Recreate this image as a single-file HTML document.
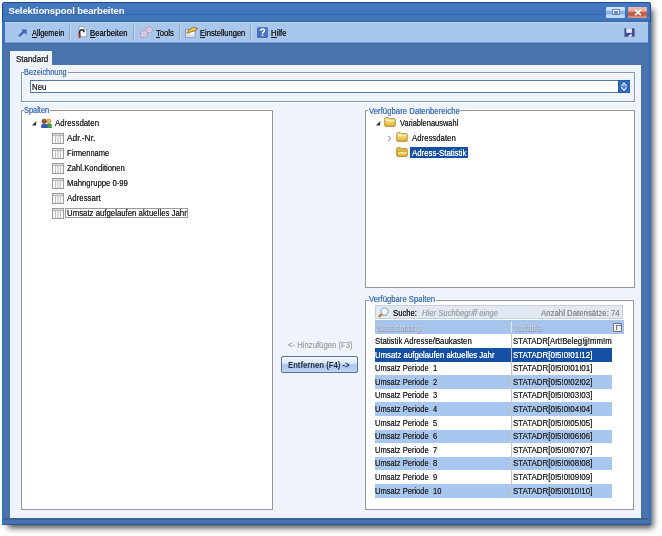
<!DOCTYPE html>
<html><head><meta charset="utf-8">
<style>
*{margin:0;padding:0;box-sizing:border-box}
html,body{width:662px;height:536px;overflow:hidden;background:#fff;font-family:"Liberation Sans",sans-serif;font-size:8px;color:#222}
.a{position:absolute}
.t{position:absolute;white-space:pre;transform-origin:0 0;opacity:.995;text-shadow:0 0 .2px currentColor}
.t u{text-decoration:underline;text-underline-offset:.5px}
.sep{position:absolute;top:23.5px;width:2px;height:16.5px;border-left:1px solid #8ea5c6;border-right:1px solid #c6d7ee}
.gb{position:absolute;border:1px solid #979797;box-shadow:0 -1px 0 #fff}
.glb{position:absolute;background:#eff4fc;height:6px}
.row{position:absolute;left:375px;width:237px}
</style></head><body>
<!-- window -->
<div class="a" style="left:2px;top:2px;width:649px;height:523px;background:#3672bd;border-radius:3px 3px 0 0;box-shadow:4px 5px 6px -2px rgba(0,0,0,.7)"></div>
<div class="a" style="left:2px;top:2px;width:649px;height:20px;border:1px solid #1d4a8e;border-bottom:0;border-top-width:1.5px;border-radius:3px 3px 0 0"></div>
<div class="a" style="left:3px;top:3px;width:647px;height:19px;background:linear-gradient(#4379c1 0,#4075bd 55%,#3466a9 60%,#4276bb 66%,#4276bb 90%,#3a68a9 95%,#3a68a9 100%)"></div>
<div class="a" style="left:4px;top:43px;width:644px;height:480px;background:#4a73ab"></div>
<div class="a" style="left:4px;top:520px;width:644px;height:2px;background:#4a73ab"></div>
<div class="a" style="left:4px;top:518px;width:644px;height:2px;background:#3c6299"></div>
<div class="a" style="left:2px;top:524px;width:649px;height:1px;background:#2a5a9c"></div>
<!-- window buttons -->
<div class="a" style="left:606px;top:7px;width:19px;height:10.5px;background:linear-gradient(#d4e6fb 0,#c6dcf8 30%,#8fb5e4 40%,#86aee2 60%,#b8d4f6 70%,#c4dcf8 100%);border-radius:1px"></div>
<div class="a" style="left:611.5px;top:9px;width:8px;height:6px;border:1px solid #6a80a8;background:#eef4fc"></div>
<div class="a" style="left:613.5px;top:11px;width:4px;height:2.5px;background:#6e8ec4"></div>
<div class="a" style="left:628px;top:7px;width:19px;height:10.5px;background:linear-gradient(#ecbcb0 0,#e4aa9c 38%,#cc6452 45%,#c4563f 75%,#d98470 85%,#e4a090 100%);border-radius:1px"></div>
<svg class="a" style="left:634px;top:8.5px" width="8" height="7" viewBox="0 0 8 7"><path d="M1.2 .8L6.8 6.2M6.8 .8L1.2 6.2" stroke="#fff" stroke-width="1.6"/></svg>
<!-- toolbar -->
<div class="a" style="left:5px;top:22px;width:643px;height:22px;background:linear-gradient(#bcd4f2 0,#a9c6eb 8%,#a8c5eb 92%,#3f6aa5 95%)"></div>
<svg class="a" style="left:17.5px;top:29px" width="9" height="8" viewBox="0 0 9 8"><path d="M1 7.2 L6 2.4" stroke="#4364b6" stroke-width="2.2"/><path d="M3.2 .5 H8.6 V5.9Z" fill="#4364b6"/></svg>
<div class="sep" style="left:69px"></div>
<svg class="a" style="left:76.5px;top:26px" width="11" height="12" viewBox="0 0 11 12"><path d="M2 .7 H7 L9.8 3.5 V10.8 H2 Z" fill="#fbfcff" stroke="#8d9cc0" stroke-width=".9"/><path d="M7 .7V3.5H9.8" fill="#dde4f2" stroke="#8d9cc0" stroke-width=".6"/><path d="M2.6 11.6 V6.3 Q2.6 3.8 4.9 3.8 Q7 3.8 7 6.2" stroke="#2a2420" stroke-width="1.5" fill="none"/><path d="M2.6 11.6 V7.6" stroke="#d01c28" stroke-width="1.6"/></svg>
<div class="sep" style="left:133px"></div>
<svg class="a" style="left:139px;top:25px" width="15" height="14" viewBox="0 0 15 14"><g stroke="#b3a4c6" stroke-width="1.6" stroke-dasharray="1.6 .9" fill="none"><circle cx="5" cy="9" r="3.4"/><circle cx="10.3" cy="4.8" r="3.1"/></g><circle cx="5" cy="9" r="2.9" fill="#e4d7eb" stroke="#bba9c9" stroke-width=".6"/><circle cx="10.3" cy="4.8" r="2.6" fill="#e8dcef" stroke="#bba9c9" stroke-width=".6"/><circle cx="5" cy="9" r="1.1" fill="#c2a6c6"/><circle cx="10.3" cy="4.8" r="1" fill="#c7adca"/></svg>
<div class="sep" style="left:179px"></div>
<svg class="a" style="left:184px;top:26px" width="14" height="12" viewBox="0 0 14 12"><rect x="1.6" y="3.8" width="9.4" height="7.4" fill="#f8fafd" stroke="#7f90ab" stroke-width=".9"/><rect x="2.1" y="8.2" width="8.4" height="2.5" fill="#d6e2f2"/><path d="M2.6 6.8 Q5 2.6 9.5 1.6 Q12.4 1 13 2.8 Q12 5 9 5.4 Q6 5.8 4.4 7.4Z" fill="#e9b72a" stroke="#7c5c12" stroke-width=".7"/><path d="M6 4.6 Q8.5 2.8 11.5 2.6" stroke="#f8e07a" stroke-width=".8" fill="none"/><path d="M12 1.6 L13.4 2.6 L12.8 4.2Z" fill="#5a4a80"/></svg>
<div class="sep" style="left:250px"></div>
<div class="a" style="left:257px;top:27px;width:11px;height:10.5px;background:#4a74c2;border-radius:1.5px"></div>
<svg class="a" style="left:257px;top:27px" width="11" height="11" viewBox="0 0 11 11"><path d="M3.6 3.9Q3.6 1.9 5.5 1.9Q7.5 1.9 7.5 3.6Q7.5 4.6 6.3 5.2Q5.5 5.6 5.5 6.7" stroke="#fff" stroke-width="1.5" fill="none"/><rect x="4.7" y="7.6" width="1.6" height="1.6" fill="#fff"/></svg>
<svg class="a" style="left:624px;top:28px" width="11" height="9" viewBox="0 0 11 9"><path d="M0.4 0.3 H9.6 L10.6 1.3 V8.7 H0.4Z" fill="#414d94"/><rect x="2.3" y="0.3" width="5.6" height="4.6" fill="#e6e6f2"/><path d="M3.8 8.7 L6.6 5.9 H7.6 V8.7Z" fill="#eef0f8"/></svg>
<!-- band & panel -->
<div class="a" style="left:10px;top:51px;width:42px;height:14px;background:#eff4fc"></div>
<div class="a" style="left:10px;top:65px;width:631px;height:453px;background:#eff4fc"></div>

<!-- Bezeichnung -->
<div class="gb" style="left:21px;top:72px;width:614px;height:30px;border-color:#8298b8;box-shadow:inset 1px 1px 0 #fff,1px 1px 0 #fff"></div>
<div class="glb" style="left:24px;top:69px;width:44px"></div>
<div class="a" style="left:30px;top:80px;width:600px;height:13px;background:#fff;border:1px solid #5776a8"></div>
<div class="a" style="left:618px;top:80px;width:12px;height:13px;background:#2f6cc2;border:1px solid #2a5aa6"></div>
<svg class="a" style="left:620px;top:81px" width="8" height="11" viewBox="0 0 8 11"><path d="M1.4 5.2 L4 2 L6.6 5.2 M1.4 6.2 L4 9.2 L6.6 6.2" stroke="#d8e6f8" stroke-width="1.3" fill="none"/><circle cx="4" cy="5.2" r=".9" fill="#9fbde6"/></svg>

<!-- Spalten -->
<div class="gb" style="left:21px;top:110px;width:252px;height:400px;background:#fff"></div>
<div class="glb" style="left:24px;top:107px;width:26px"></div>
<!-- Datenbereiche -->
<div class="gb" style="left:365px;top:110px;width:270px;height:178px;background:#fff"></div>
<div class="glb" style="left:368px;top:107px;width:92px"></div>
<!-- Verfuegbare Spalten -->
<div class="gb" style="left:365px;top:300px;width:269px;height:210px;background:#fff"></div>
<div class="glb" style="left:369px;top:296px;width:67px"></div>

<svg width="0" height="0" style="position:absolute">
<defs>
<symbol id="colic" viewBox="0 0 12 11"><rect x=".5" y=".5" width="11" height="10" fill="#fdfdfd" stroke="#9a9a9a"/><path d="M1 2.6H11" stroke="#a8a8a8" stroke-width="1"/><rect x="1" y="1" width="10" height="1.2" fill="#dcdcdc"/><path d="M3.6 3V10M6 3V10M8.4 3V10" stroke="#b4b4b4" stroke-width=".9"/></symbol>
<linearGradient id="fg" x1="0" y1="0" x2="0" y2="1"><stop offset="0" stop-color="#fdf0b0"/><stop offset=".5" stop-color="#f3d26a"/><stop offset="1" stop-color="#e0ac30"/></linearGradient>
<symbol id="fold" viewBox="0 0 12 10"><path d="M.8 1.6Q.8 .7 1.7 .7H4.3L5.3 1.7H10.2Q11.2 1.7 11.2 2.7V8.5Q11.2 9.3 10.4 9.3H1.6Q.8 9.3 .8 8.5Z" fill="url(#fg)" stroke="#a8801e" stroke-width=".9"/><path d="M1.8 3.4H10.2" stroke="#fff6c8" stroke-width=".9"/></symbol>
<symbol id="foldo" viewBox="0 0 12 10"><path d="M.8 1.6Q.8 .7 1.7 .7H4.3L5.3 1.7H10.2Q11.2 1.7 11.2 2.7V8.5Q11.2 9.3 10.4 9.3H1.6Q.8 9.3 .8 8.5Z" fill="#e8bc48" stroke="#a8801e" stroke-width=".9"/><path d="M1.6 4.3H10L11.6 5.6L10.4 9.2H1.5Z" fill="url(#fg)" stroke="#b08a28" stroke-width=".7"/></symbol>
</defs></svg>

<!-- left tree -->
<svg class="a" style="left:31px;top:120px" width="6" height="6" viewBox="0 0 6 6"><path d="M.8 5.4H5.2V1Z" fill="#3a3a3a"/></svg>
<svg class="a" style="left:40.5px;top:117.5px" width="11" height="10.5" viewBox="0 0 11 10.5"><path d="M5.2 10.2V7.6Q5.2 5.6 7.9 5.6Q10.6 5.6 10.6 7.6V10.2Z" fill="#3fa23f" stroke="#2a7a2a" stroke-width=".5"/><circle cx="7.9" cy="3" r="2.1" fill="#f0bc50" stroke="#a87a28" stroke-width=".6"/><path d="M.4 10.2V7.8Q.4 5.9 3.2 5.9Q6 5.9 6 7.8V10.2Z" fill="#3858c6" stroke="#243e96" stroke-width=".5"/><circle cx="3.2" cy="3.3" r="2.1" fill="#a4582a" stroke="#3e2414" stroke-width=".7"/></svg>
<svg class="a" style="left:52px;top:133px" width="12" height="11"><use href="#colic"/></svg>
<svg class="a" style="left:52px;top:148px" width="12" height="11"><use href="#colic"/></svg>
<svg class="a" style="left:52px;top:163px" width="12" height="11"><use href="#colic"/></svg>
<svg class="a" style="left:52px;top:178px" width="12" height="11"><use href="#colic"/></svg>
<svg class="a" style="left:52px;top:193px" width="12" height="11"><use href="#colic"/></svg>
<svg class="a" style="left:52px;top:208px" width="12" height="11"><use href="#colic"/></svg>
<div class="a" style="left:65px;top:208px;width:123px;height:10px;border:1px solid #9a9a9a"></div>

<!-- right tree -->
<svg class="a" style="left:375px;top:120px" width="6" height="6" viewBox="0 0 6 6"><path d="M.8 5.4H5.2V1Z" fill="#3a3a3a"/></svg>
<svg class="a" style="left:384px;top:117px" width="12" height="10"><use href="#fold"/></svg>
<svg class="a" style="left:387px;top:134.5px" width="5" height="7" viewBox="0 0 5 7"><path d="M1 .8L4 3.5L1 6.2" stroke="#8c8c8c" fill="none" stroke-width="1"/></svg>
<svg class="a" style="left:396px;top:132px" width="12" height="10"><use href="#fold"/></svg>
<svg class="a" style="left:396px;top:147px" width="12" height="10"><use href="#foldo"/></svg>
<div class="a" style="left:410px;top:147px;width:58px;height:11px;background:#1550a6"></div>

<!-- list -->
<div class="a" style="left:375px;top:305px;width:248px;height:14px;background:#e2e9f3;border:1px solid #c4cfdf"></div>
<svg class="a" style="left:377px;top:307px" width="13" height="11" viewBox="0 0 13 11"><circle cx="7.6" cy="4.6" r="3.6" fill="#f4f9fd" stroke="#8ea9c9" stroke-width="1.1"/><path d="M2.6 9.2L4.4 7.5" stroke="#c07a38" stroke-width="2.4" stroke-linecap="round"/></svg>
<div class="a" style="left:375px;top:320px;width:249px;height:14px;background:#a6c4ec"></div>
<div class="a" style="left:511px;top:321px;width:1px;height:12px;background:#dfe9f7"></div>
<div class="a" style="left:613px;top:323px;width:9px;height:8.5px;border:1px solid #6c7486;border-radius:1px;background:#f6f7f9"></div>
<div class="a" style="left:615.5px;top:325px;width:5.5px;height:5px;border:1px solid #6c7486;border-width:1px 0 0 1px;background:#e9efdc"></div>
<div class="row" style="top:348.00px;height:13.60px;background:#1550a6"></div>
<div class="row" style="top:375.20px;height:13.60px;background:#a8c7ee"></div>
<div class="row" style="top:402.40px;height:13.60px;background:#a8c7ee"></div>
<div class="row" style="top:429.60px;height:13.60px;background:#a8c7ee"></div>
<div class="row" style="top:456.80px;height:13.60px;background:#a8c7ee"></div>
<div class="row" style="top:484.00px;height:13.60px;background:#a8c7ee"></div>
<div class="a" style="left:511px;top:334px;width:1px;height:164px;background:#c6c6c6"></div>
<!-- middle button -->
<div class="a" style="left:281px;top:355.5px;width:77px;height:17px;border:1px solid #5b6f94;border-radius:2px;background:linear-gradient(#f3f7fc 0%,#dde9f7 40%,#a9c6ee 55%,#c0d6f3 100%)"></div>
<div class="t" style="left:8.40px;top:5.00px;font:normal bold 9.50px 'Liberation Sans';line-height:12px;letter-spacing:-0.090px;color:#fff;text-shadow:none">Selektionspool bearbeiten</div>
<div class="t" style="left:31.90px;top:29.00px;font:normal normal 8.20px 'Liberation Sans';line-height:10px;transform:scaleX(0.8984);color:#1a1a1a"><u>A</u>llgemein</div>
<div class="t" style="left:90.40px;top:29.00px;font:normal normal 8.20px 'Liberation Sans';line-height:10px;transform:scaleX(0.9467);color:#1a1a1a"><u>B</u>earbeiten</div>
<div class="t" style="left:155.50px;top:29.00px;font:normal normal 8.20px 'Liberation Sans';line-height:10px;transform:scaleX(0.9359);color:#1a1a1a"><u>T</u>ools</div>
<div class="t" style="left:199.50px;top:29.00px;font:normal normal 8.20px 'Liberation Sans';line-height:10px;transform:scaleX(0.9213);color:#1a1a1a"><u>E</u>instellungen</div>
<div class="t" style="left:270.70px;top:29.00px;font:normal normal 8.20px 'Liberation Sans';line-height:10px;transform:scaleX(0.9457);color:#1a1a1a"><u>H</u>ilfe</div>
<div class="t" style="left:15.60px;top:55.00px;font:normal normal 8.20px 'Liberation Sans';line-height:10px;transform:scaleX(0.9689);color:#2c2c2c">Standard</div>
<div class="t" style="left:24.40px;top:68.00px;font:normal normal 8.20px 'Liberation Sans';line-height:10px;transform:scaleX(0.8998);color:#4676bb">Bezeichnung</div>
<div class="t" style="left:31.60px;top:83.00px;font:normal normal 8.20px 'Liberation Sans';line-height:10px;transform:scaleX(0.9580);color:#2c2c2c">Neu</div>
<div class="t" style="left:24.40px;top:106.00px;font:normal normal 8.20px 'Liberation Sans';line-height:10px;transform:scaleX(0.9071);color:#4676bb">Spalten</div>
<div class="t" style="left:368.50px;top:107.00px;font:normal normal 8.20px 'Liberation Sans';line-height:10px;transform:scaleX(0.9509);color:#4676bb">Verfügbare Datenbereiche</div>
<div class="t" style="left:369.20px;top:295.00px;font:normal normal 8.20px 'Liberation Sans';line-height:10px;transform:scaleX(0.9414);color:#4676bb">Verfügbare Spalten</div>
<div class="t" style="left:55.30px;top:119.00px;font:normal normal 8.20px 'Liberation Sans';line-height:10px;transform:scaleX(0.9568);color:#2c2c2c">Adressdaten</div>
<div class="t" style="left:67.10px;top:134.00px;font:normal normal 8.20px 'Liberation Sans';line-height:10px;transform:scaleX(1.0192);color:#2c2c2c">Adr.-Nr.</div>
<div class="t" style="left:67.10px;top:149.00px;font:normal normal 8.20px 'Liberation Sans';line-height:10px;transform:scaleX(0.9180);color:#2c2c2c">Firmenname</div>
<div class="t" style="left:67.10px;top:164.00px;font:normal normal 8.20px 'Liberation Sans';line-height:10px;transform:scaleX(0.9422);color:#2c2c2c">Zahl.Konditionen</div>
<div class="t" style="left:67.10px;top:179.00px;font:normal normal 8.20px 'Liberation Sans';line-height:10px;transform:scaleX(0.9421);color:#2c2c2c">Mahngruppe 0-99</div>
<div class="t" style="left:67.10px;top:194.00px;font:normal normal 8.20px 'Liberation Sans';line-height:10px;transform:scaleX(0.9616);color:#2c2c2c">Adressart</div>
<div class="t" style="left:67.10px;top:209.00px;font:normal normal 8.20px 'Liberation Sans';line-height:10px;transform:scaleX(0.9536);color:#2c2c2c">Umsatz aufgelaufen aktuelles Jahr</div>
<div class="t" style="left:400.00px;top:119.00px;font:normal normal 8.20px 'Liberation Sans';line-height:10px;transform:scaleX(0.9089);color:#2c2c2c">Variablenauswahl</div>
<div class="t" style="left:411.70px;top:134.00px;font:normal normal 8.20px 'Liberation Sans';line-height:10px;transform:scaleX(0.9525);color:#2c2c2c">Adressdaten</div>
<div class="t" style="left:411.70px;top:149.00px;font:normal normal 8.20px 'Liberation Sans';line-height:10px;transform:scaleX(0.9582);color:#fff">Adress-Statistik</div>
<div class="t" style="left:392.50px;top:308.00px;font:normal normal 8.60px 'Liberation Sans';line-height:11px;transform:scaleX(0.8967);color:#1a1a1a">Suche:</div>
<div class="t" style="left:421.50px;top:309.00px;font:italic normal 8.20px 'Liberation Sans';line-height:10px;transform:scaleX(0.9393);color:#a0a4ac">Hier Suchbegriff einge</div>
<div class="t" style="left:540.70px;top:309.00px;font:normal normal 8.20px 'Liberation Sans';line-height:10px;transform:scaleX(0.9552);color:#8c8c8c">Anzahl Datensätze: 74</div>
<div class="t" style="left:376.70px;top:324.00px;font:normal normal 8.20px 'Liberation Sans';line-height:10px;transform:scaleX(0.9188);color:#d6dee9;text-shadow:.5px .5px 0 #8091b0,-.4px -.4px 0 #8fa0bc">Bezeichnung</div>
<div class="t" style="left:513.10px;top:324.00px;font:normal normal 8.20px 'Liberation Sans';line-height:10px;transform:scaleX(0.9953);color:#d6dee9;text-shadow:.5px .5px 0 #8091b0,-.4px -.4px 0 #8fa0bc">Variable</div>
<div class="t" style="left:375.30px;top:337.00px;font:normal normal 8.20px 'Liberation Sans';line-height:10px;transform:scaleX(0.9537);color:#2c2c2c">Statistik Adresse/Baukasten</div>
<div class="t" style="left:513.10px;top:337.00px;font:normal normal 8.20px 'Liberation Sans';line-height:10px;transform:scaleX(0.9558);color:#2c2c2c">STATADR[Art!Beleg!jj!mm!m</div>
<div class="t" style="left:375.30px;top:351.00px;font:normal normal 8.20px 'Liberation Sans';line-height:10px;transform:scaleX(0.9512);color:#fff">Umsatz aufgelaufen aktuelles Jahr</div>
<div class="t" style="left:513.10px;top:351.00px;font:normal normal 8.20px 'Liberation Sans';line-height:10px;transform:scaleX(0.9692);color:#fff">STATADR[0!5!0!01!12]</div>
<div class="t" style="left:375.30px;top:364.00px;font:normal normal 8.20px 'Liberation Sans';line-height:10px;transform:scaleX(0.9219);color:#2c2c2c">Umsatz Periode</div>
<div class="t" style="left:433.30px;top:364.00px;font:normal normal 8.20px 'Liberation Sans';line-height:10px;transform:scaleX(0.9200);color:#2c2c2c">1</div>
<div class="t" style="left:513.10px;top:364.00px;font:normal normal 8.20px 'Liberation Sans';line-height:10px;transform:scaleX(0.9692);color:#2c2c2c">STATADR[0!5!0!01!01]</div>
<div class="t" style="left:375.30px;top:378.00px;font:normal normal 8.20px 'Liberation Sans';line-height:10px;transform:scaleX(0.9219);color:#2c2c2c">Umsatz Periode</div>
<div class="t" style="left:433.30px;top:378.00px;font:normal normal 8.20px 'Liberation Sans';line-height:10px;transform:scaleX(0.9200);color:#2c2c2c">2</div>
<div class="t" style="left:513.10px;top:378.00px;font:normal normal 8.20px 'Liberation Sans';line-height:10px;transform:scaleX(0.9692);color:#2c2c2c">STATADR[0!5!0!02!02]</div>
<div class="t" style="left:375.30px;top:391.00px;font:normal normal 8.20px 'Liberation Sans';line-height:10px;transform:scaleX(0.9219);color:#2c2c2c">Umsatz Periode</div>
<div class="t" style="left:433.30px;top:391.00px;font:normal normal 8.20px 'Liberation Sans';line-height:10px;transform:scaleX(0.9200);color:#2c2c2c">3</div>
<div class="t" style="left:513.10px;top:391.00px;font:normal normal 8.20px 'Liberation Sans';line-height:10px;transform:scaleX(0.9692);color:#2c2c2c">STATADR[0!5!0!03!03]</div>
<div class="t" style="left:375.30px;top:405.00px;font:normal normal 8.20px 'Liberation Sans';line-height:10px;transform:scaleX(0.9219);color:#2c2c2c">Umsatz Periode</div>
<div class="t" style="left:433.30px;top:405.00px;font:normal normal 8.20px 'Liberation Sans';line-height:10px;transform:scaleX(0.9200);color:#2c2c2c">4</div>
<div class="t" style="left:513.10px;top:405.00px;font:normal normal 8.20px 'Liberation Sans';line-height:10px;transform:scaleX(0.9692);color:#2c2c2c">STATADR[0!5!0!04!04]</div>
<div class="t" style="left:375.30px;top:419.00px;font:normal normal 8.20px 'Liberation Sans';line-height:10px;transform:scaleX(0.9219);color:#2c2c2c">Umsatz Periode</div>
<div class="t" style="left:433.30px;top:419.00px;font:normal normal 8.20px 'Liberation Sans';line-height:10px;transform:scaleX(0.9200);color:#2c2c2c">5</div>
<div class="t" style="left:513.10px;top:419.00px;font:normal normal 8.20px 'Liberation Sans';line-height:10px;transform:scaleX(0.9692);color:#2c2c2c">STATADR[0!5!0!05!05]</div>
<div class="t" style="left:375.30px;top:432.00px;font:normal normal 8.20px 'Liberation Sans';line-height:10px;transform:scaleX(0.9219);color:#2c2c2c">Umsatz Periode</div>
<div class="t" style="left:433.30px;top:432.00px;font:normal normal 8.20px 'Liberation Sans';line-height:10px;transform:scaleX(0.9200);color:#2c2c2c">6</div>
<div class="t" style="left:513.10px;top:432.00px;font:normal normal 8.20px 'Liberation Sans';line-height:10px;transform:scaleX(0.9692);color:#2c2c2c">STATADR[0!5!0!06!06]</div>
<div class="t" style="left:375.30px;top:446.00px;font:normal normal 8.20px 'Liberation Sans';line-height:10px;transform:scaleX(0.9219);color:#2c2c2c">Umsatz Periode</div>
<div class="t" style="left:433.30px;top:446.00px;font:normal normal 8.20px 'Liberation Sans';line-height:10px;transform:scaleX(0.9200);color:#2c2c2c">7</div>
<div class="t" style="left:513.10px;top:446.00px;font:normal normal 8.20px 'Liberation Sans';line-height:10px;transform:scaleX(0.9692);color:#2c2c2c">STATADR[0!5!0!07!07]</div>
<div class="t" style="left:375.30px;top:459.00px;font:normal normal 8.20px 'Liberation Sans';line-height:10px;transform:scaleX(0.9219);color:#2c2c2c">Umsatz Periode</div>
<div class="t" style="left:433.30px;top:459.00px;font:normal normal 8.20px 'Liberation Sans';line-height:10px;transform:scaleX(0.9200);color:#2c2c2c">8</div>
<div class="t" style="left:513.10px;top:459.00px;font:normal normal 8.20px 'Liberation Sans';line-height:10px;transform:scaleX(0.9692);color:#2c2c2c">STATADR[0!5!0!08!08]</div>
<div class="t" style="left:375.30px;top:473.00px;font:normal normal 8.20px 'Liberation Sans';line-height:10px;transform:scaleX(0.9219);color:#2c2c2c">Umsatz Periode</div>
<div class="t" style="left:433.30px;top:473.00px;font:normal normal 8.20px 'Liberation Sans';line-height:10px;transform:scaleX(0.9200);color:#2c2c2c">9</div>
<div class="t" style="left:513.10px;top:473.00px;font:normal normal 8.20px 'Liberation Sans';line-height:10px;transform:scaleX(0.9692);color:#2c2c2c">STATADR[0!5!0!09!09]</div>
<div class="t" style="left:375.30px;top:487.00px;font:normal normal 8.20px 'Liberation Sans';line-height:10px;transform:scaleX(0.9219);color:#2c2c2c">Umsatz Periode</div>
<div class="t" style="left:433.30px;top:487.00px;font:normal normal 8.20px 'Liberation Sans';line-height:10px;transform:scaleX(0.9200);color:#2c2c2c">10</div>
<div class="t" style="left:513.10px;top:487.00px;font:normal normal 8.20px 'Liberation Sans';line-height:10px;transform:scaleX(0.9692);color:#2c2c2c">STATADR[0!5!0!10!10]</div>
<div class="t" style="left:288.30px;top:341.00px;font:normal normal 8.20px 'Liberation Sans';line-height:10px;transform:scaleX(0.9431);color:#a6a6a6">&lt;- Hinzufügen (F3)</div>
<div class="t" style="left:288.30px;top:361.00px;font:normal bold 8.20px 'Liberation Sans';line-height:10px;transform:scaleX(0.9436);color:#1e2a40;text-shadow:none">Entfernen (F4) -&gt;</div>
</body></html>
